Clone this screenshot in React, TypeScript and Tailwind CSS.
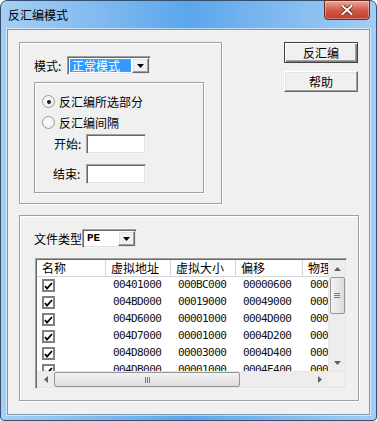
const cjk = "font-['Noto_Sans_CJK_SC','Noto_Sans',sans-serif]";
const mono = "font-['DejaVu_Sans_Mono','Liberation_Mono',monospace]";

const sunken =
  'border border-t-[#a0a0a0] border-l-[#a0a0a0] border-r-[#f4f4f4] border-b-[#f4f4f4] shadow-[inset_1px_1px_0_#696969,inset_-1px_-1px_0_#e3e3e3]';
const raised =
  'border border-t-[#fff] border-l-[#fff] border-r-[#696969] border-b-[#696969] shadow-[inset_-1px_-1px_0_#a0a0a0,inset_1px_1px_0_#e3e3e3]';
const etched = 'border border-[#a0a0a0] shadow-[inset_1px_1px_0_#fff,1px_1px_0_#fff]';

const rows = [
  ['00401000', '000BC000', '00000600', '00048A00'],
  ['004BD000', '00019000', '00049000', '00004000'],
  ['004D6000', '00001000', '0004D000', '00000200'],
  ['004D7000', '00001000', '0004D200', '00000200'],
  ['004D8000', '00003000', '0004D400', '00001000'],
  ['004DB000', '00001000', '0004E400', '00000200'],
];

function DropButton() {
  return (
    <div className={`flex h-full w-[17px] shrink-0 items-center justify-center bg-[#f0f0f0] ${raised}`}>
      <svg width="7" height="4" viewBox="0 0 7 4">
        <path d="M0 0h7L3.5 4z" fill="#000" />
      </svg>
    </div>
  );
}

function Check() {
  return (
    <div className="flex h-[13px] w-[13px] items-center justify-center border-2 border-[#808080] bg-white">
      <svg width="9" height="8" viewBox="0 0 9 8">
        <path d="M1 4l2 2.5L8 1" stroke="#000" strokeWidth="1.8" fill="none" />
      </svg>
    </div>
  );
}

function Radio({ on }: { on: boolean }) {
  return (
    <div className="flex h-[13px] w-[13px] items-center justify-center rounded-full border border-[#9a9a9a] bg-[radial-gradient(circle_at_40%_40%,#fff,#e6e6e6)]">
      {on && <div className="h-[4px] w-[4px] rounded-full bg-[#1a1a1a]" />}
    </div>
  );
}

function Arrow({ dir }: { dir: 'up' | 'down' | 'left' | 'right' }) {
  const d = {
    up: 'M0 4L3.5 0L7 4z',
    down: 'M0 0h7L3.5 4z',
    left: 'M4 0v7L0 3.5z',
    right: 'M0 0v7L4 3.5z',
  }[dir];
  const horiz = dir === 'left' || dir === 'right';
  return (
    <svg width={horiz ? 4 : 7} height={horiz ? 7 : 4} viewBox={horiz ? '0 0 4 7' : '0 0 7 4'}>
      <path d={d} fill="#606060" />
    </svg>
  );
}

function ListView() {
  const cols = [
    { label: '名称', w: 'w-[69px]' },
    { label: '虚拟地址', w: 'w-[65px]' },
    { label: '虚拟大小', w: 'w-[65px]' },
    { label: '偏移', w: 'w-[67px]' },
    { label: '物理大小', w: 'w-[65px]' },
  ];
  return (
    <div className={`ml-[15px] mt-[10px] flex h-[131px] w-[312px] flex-col bg-white ${sunken} p-px`}>
      <div className="flex h-[111px]">
        <div className="w-[291px] overflow-hidden">
          <div className="flex h-[17px] w-max border-b border-[#d5d5d5] bg-white">
            {cols.map((c) => (
              <div key={c.label} className={`${c.w} h-full shrink-0 border-r border-[#d5d5d5] pl-[5px] text-[12px] leading-[16px] text-black ${cjk}`}>
                {c.label}
              </div>
            ))}
          </div>
          {rows.map((r, i) => (
            <div key={i} className="flex h-[17px] w-max items-center">
              <div className="flex w-[69px] shrink-0 pl-[5px]">
                <Check />
              </div>
              {r.map((v, j) => (
                <div key={j} className={`${j === 2 ? 'w-[67px]' : 'w-[65px]'} shrink-0 pl-[7px] text-[11px] tracking-[-0.6px] text-[#111] ${mono}`}>
                  {v}
                </div>
              ))}
            </div>
          ))}
        </div>
        <div className="flex w-[17px] flex-col items-center border-l border-[#e6e6e6] bg-[#ededed]">
          <div className="flex h-[17px] items-center"><Arrow dir="up" /></div>
          <div className="flex h-[37px] w-[15px] items-center justify-center rounded-[2px] border border-[#969696] bg-linear-to-r from-[#f3f3f3] to-[#dcdcdc]">
            <div className="flex flex-col gap-px">
              <div className="h-px w-[6px] bg-[#7a7a7a]" />
              <div className="h-px w-[6px] bg-[#7a7a7a]" />
              <div className="h-px w-[6px] bg-[#7a7a7a]" />
            </div>
          </div>
          <div className="flex-1" />
          <div className="flex h-[17px] items-center"><Arrow dir="down" /></div>
        </div>
      </div>
      <div className="flex h-[17px] border-t border-[#e6e6e6] bg-[#ededed]">
        <div className="flex w-[17px] items-center justify-center"><Arrow dir="left" /></div>
        <div className="flex w-[186px] items-center justify-center rounded-[2px] border border-[#969696] bg-linear-to-b from-[#f3f3f3] to-[#dcdcdc]">
          <div className="flex gap-px">
            <div className="h-[6px] w-px bg-[#7a7a7a]" />
            <div className="h-[6px] w-px bg-[#7a7a7a]" />
            <div className="h-[6px] w-px bg-[#7a7a7a]" />
          </div>
        </div>
        <div className="flex-1" />
        <div className="flex w-[17px] items-center justify-center"><Arrow dir="right" /></div>
        <div className="w-[17px] bg-[#f0f0f0]" />
      </div>
    </div>
  );
}

export default function App() {
  return (
    <div className={`flex h-[421px] w-[377px] flex-col rounded-t-[7px] rounded-b-[4px] border border-[#34506e] bg-linear-to-r from-[#a6cff2] via-[#5ba6ec] to-[#a3cdf2] ${cjk}`}>
      {/* Title bar */}
      <div className="flex h-[28px] items-start justify-between pl-[7px] pr-[6px]">
        <div className="mt-[6px] text-[12px] leading-[16px] text-black">反汇编模式</div>
        <div className="-mt-px flex h-[20px] w-[46px] items-center justify-center rounded-b-[4px] border border-[#6b2a22] bg-linear-to-b from-[#e9a99a] via-[#cf5a47] to-[#c13b28] shadow-[inset_0_0_0_1px_rgba(255,255,255,0.35)]">
          <svg width="12" height="10" viewBox="0 0 12 10">
            <path d="M1.5 1l9 8M10.5 1l-9 8" stroke="#5c1a12" strokeWidth="3.6" strokeLinecap="square" />
            <path d="M1.5 1l9 8M10.5 1l-9 8" stroke="#fff" strokeWidth="2" strokeLinecap="square" />
          </svg>
        </div>
      </div>

      {/* Client area */}
      <div className="mx-[6px] mb-[5px] flex-1 border border-[#7d96b2] bg-[#f0f0f0] pl-[11px] pt-[12px] shadow-[0_0_0_1px_rgba(255,255,255,0.55)]">
        <div className="flex">
          {/* Mode group */}
          <div className={`flex h-[162px] w-[203px] flex-col ${etched}`}>
            <div className="ml-[14px] mt-[13px] flex h-[19px] items-center">
              <span className="w-[33px] text-[12px] text-black">模式:</span>
              <div className={`flex h-[19px] w-[84px] items-stretch bg-white ${sunken} p-px`}>
                <div className="flex flex-1 items-center p-px">
                  <div className="flex h-full w-full items-center border border-dotted border-[#e08a2a] bg-[#3399ff] pl-px text-[12px] leading-none text-white">
                    正常模式
                  </div>
                </div>
                <DropButton />
              </div>
            </div>
            <div className={`ml-[14px] mt-[7px] flex h-[111px] w-[170px] flex-col pl-[7px] pt-[11px] ${etched}`}>
              <div className="flex h-[15px] items-center gap-[4px] text-[12px] text-black">
                <Radio on />
                <span>反汇编所选部分</span>
              </div>
              <div className="mt-[6px] flex h-[15px] items-center gap-[4px] text-[12px] text-black">
                <Radio on={false} />
                <span>反汇编间隔</span>
              </div>
              <div className="mt-[4px] flex h-[20px] items-center">
                <span className="w-[44px] pl-[12px] text-[12px] text-black">开始:</span>
                <div className={`h-[20px] w-[60px] bg-white ${sunken}`} />
              </div>
              <div className="mt-[10px] flex h-[20px] items-center">
                <span className="w-[44px] pl-[11px] text-[12px] text-black">结束:</span>
                <div className={`h-[20px] w-[60px] bg-white ${sunken}`} />
              </div>
            </div>
          </div>

          {/* Buttons */}
          <div className="ml-[62px] flex flex-col gap-[8px]">
            <div className="flex h-[21px] w-[74px] items-center justify-center border border-[#404040] bg-[#f0f0f0] shadow-[inset_1px_1px_0_#fff,inset_-1px_-1px_0_#808080,inset_-2px_-2px_0_#a0a0a0] text-[12px] text-black">
              反汇编
            </div>
            <div className={`flex h-[21px] w-[74px] items-center justify-center bg-[#f0f0f0] text-[12px] text-black ${raised}`}>
              帮助
            </div>
          </div>
        </div>

        {/* File group */}
        <div className={`mt-[11px] flex h-[186px] w-[340px] flex-col ${etched}`}>
          <div className="ml-[14px] mt-[13px] flex h-[19px] items-center">
            <span className="w-[48px] text-[12px] text-black">文件类型</span>
            <div className={`flex h-[19px] w-[55px] items-stretch bg-white ${sunken} p-px`}>
              <div className={`flex flex-1 items-center pl-[3px] text-[11px] font-bold text-black font-['Liberation_Mono',monospace]`}>PE</div>
              <DropButton />
            </div>
          </div>
          <ListView />
        </div>
      </div>
    </div>
  );
}
